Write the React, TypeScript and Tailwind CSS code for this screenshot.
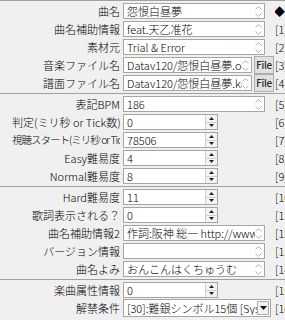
import React from "react";

const F = { fontFamily: '"Noto Sans CJK JP", "Liberation Sans", sans-serif' };

function Arrows() {
  return (
    <div className="flex h-full w-[7px] shrink-0 flex-col items-center justify-center gap-[3px]">
      <svg width="7" height="4" viewBox="0 0 7 4"><path d="M0.5 3.5 L3.5 0.5 L6.5 3.5" fill="none" stroke="#b4b4b4" strokeWidth="1" /></svg>
      <svg width="7" height="4" viewBox="0 0 7 4"><path d="M0.5 0.5 L3.5 3.5 L6.5 0.5" fill="none" stroke="#b4b4b4" strokeWidth="1" /></svg>
    </div>
  );
}

function Memo({ text, w = "w-[142px]" }: { text: string; w?: string }) {
  return (
    <div className={`${w} flex h-[16px] items-center border border-[#a5a5a5] bg-white`}>
      <div className="flex-1 overflow-hidden whitespace-nowrap pl-[3px] leading-[14px]">{text}</div>
      <Arrows />
      <div className="w-[2px]" />
    </div>
  );
}

function FileBox({ text }: { text: string }) {
  return (
    <div className="flex items-center gap-[2px]">
      <Memo text={text} w="w-[129px]" />
      <div className="flex h-[18px] w-[20px] items-center justify-center overflow-visible border border-[#adadad] bg-[#e1e1e1] text-[10px] font-normal leading-none tracking-[-0.3px]">File</div>
    </div>
  );
}

function Num({ text }: { text: string }) {
  return (
    <div className="flex h-[16px] w-[95px] items-center border border-[#a5a5a5] bg-white">
      <div className="flex-1 overflow-hidden whitespace-nowrap pl-[3px] leading-[14px]">{text}</div>
      <div className="flex h-full w-[12px] flex-col border-l border-[#d0d0d0]">
        <div className="flex flex-1 items-center justify-center border-b border-[#d0d0d0] bg-[#f4f4f4]">
          <svg width="5" height="3" viewBox="0 0 5 3"><path d="M0 3 L2.5 0 L5 3 Z" fill="#222" /></svg>
        </div>
        <div className="flex flex-1 items-center justify-center bg-[#f4f4f4]">
          <svg width="5" height="3" viewBox="0 0 5 3"><path d="M0 0 L2.5 3 L5 0 Z" fill="#222" /></svg>
        </div>
      </div>
    </div>
  );
}

function Combo({ text }: { text: string }) {
  return (
    <div className="flex h-[18px] w-[148px] items-center border border-[#a5a5a5] bg-white">
      <div className="flex-1 overflow-hidden whitespace-nowrap pl-[3px] leading-[14px]">{text}</div>
      <div className="mr-px flex h-[14px] w-[12px] items-center justify-center border border-[#adadad] bg-[#f0f0f0]">
        <svg width="7" height="4" viewBox="0 0 7 4"><path d="M0 0 L3.5 4 L7 0 Z" fill="#111" /></svg>
      </div>
    </div>
  );
}

function Row({ label, right, children, left = false }: { label: string; right: React.ReactNode; children?: React.ReactNode; left?: boolean }) {
  return (
    <div className="flex h-[18px] items-center">
      <div className={`ml-[12px] w-[108px] shrink-0 overflow-hidden whitespace-nowrap ${left ? "text-left text-[10.5px] tracking-[-1px]" : "text-right"}`}>{label}</div>
      <div className="ml-[3px] flex w-[152px] shrink-0 items-center">{children}</div>
      <div className="overflow-hidden whitespace-nowrap">{right}</div>
    </div>
  );
}

function Sep() {
  return <div className="my-px h-px bg-[#a0a0a0]" />;
}

export default function App() {
  return (
    <div className="h-[320px] w-[285px] overflow-hidden bg-[#f0f0f0] text-[11px] font-light text-black" style={F}>
      <div className="h-px bg-[#a0a0a0]" />
      <div className="h-px" />
      <Row label="曲名" right={<span className="ml-[-1px] font-normal">◆</span>}><Memo text="怨恨白昼夢" /></Row>
      <Row label="曲名補助情報" right="[1]"><Memo text="feat.天乙准花" /></Row>
      <Row label="素材元" right="[2]"><Memo text="Trial & Error" /></Row>
      <Row label="音楽ファイル名" right="[3]"><FileBox text="Datav120/怨恨白昼夢.ogg" /></Row>
      <Row label="譜面ファイル名" right="[4]"><FileBox text="Datav120/怨恨白昼夢.kmp" /></Row>
      <Sep />
      <Row label="表記BPM" right="[5]"><Memo text="186" /></Row>
      <Row label="判定(ミリ秒 or Tick数)" right="[6]"><Num text="0" /></Row>
      <Row label="視聴スタート(ミリ秒 or Tick数)" right="[7]" left><Num text="78506" /></Row>
      <Row label="Easy難易度" right="[8]"><Num text="4" /></Row>
      <Row label="Normal難易度" right="[9]"><Num text="8" /></Row>
      <Sep />
      <Row label="Hard難易度" right="[10]"><Num text="11" /></Row>
      <Row label="歌詞表示される？" right="[11]"><Num text="0" /></Row>
      <Row label="曲名補助情報2" right="[12]"><Memo text="作詞:阪神 総一  http://www.example" /></Row>
      <Row label="バージョン情報" right="[13]"><Memo text="" /></Row>
      <Row label="曲名よみ" right="[14]"><Memo text="おんこんはくちゅうむ" /></Row>
      <Sep />
      <Row label="楽曲属性情報" right="[15]"><Num text="0" /></Row>
      <Row label="解禁条件" right="[16]"><Combo text="[30]:難銀シンボル15個 [SysDB:1]" /></Row>
      <Row label="閣" right="[17]"></Row>
    </div>
  );
}
